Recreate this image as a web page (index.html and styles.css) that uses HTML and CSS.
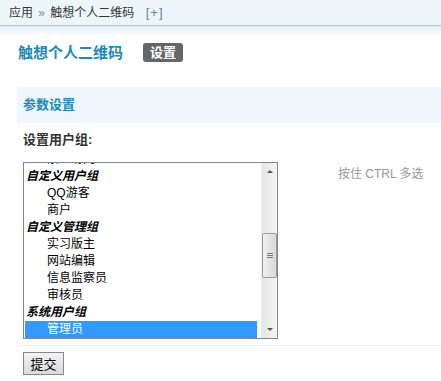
FILE: index.html
```html
<!DOCTYPE html>
<html lang="zh-CN">
<head>
  <meta charset="UTF-8" />
  <title>触想个人二维码 - 设置</title>
  <link rel="stylesheet" href="styles.css">
</head>
<body>
  <div class="crumb">应用 <span class="raquo">»</span> 触想个人二维码 <span class="add">[+]</span></div>
  <div class="fade"></div>
  <div class="title">
    <h3>触想个人二维码</h3>
    <span class="badge">设置</span>
  </div>
  <div class="section-head">参数设置</div>
  <div class="field-label">设置用户组:</div>
  <div class="field-row">
    <div class="listbox">
      <div class="options">
        <div class="opt">禁止访问</div>
        <div class="group">自定义用户组</div>
        <div class="opt">QQ游客</div>
        <div class="opt">商户</div>
        <div class="group">自定义管理组</div>
        <div class="opt">实习版主</div>
        <div class="opt">网站编辑</div>
        <div class="opt">信息监察员</div>
        <div class="opt">审核员</div>
        <div class="group">系统用户组</div>
        <div class="opt selected">管理员</div>
      </div>
      <div class="scrollbar">
        <div class="arrow"><span class="up"></span></div>
        <div class="track"><div class="thumb"><span class="grip"></span></div></div>
        <div class="arrow"><span class="down"></span></div>
      </div>
    </div>
    <div class="tip">按住 CTRL 多选</div>
  </div>
  <div class="rule"></div>
  <div class="actions">
    <button type="submit">提交</button>
  </div>
</body>
</html>
```
FILE: styles.css
```css
body { margin: 0; font: 12px "Liberation Sans", "Noto Sans CJK SC", sans-serif; color: #333; background: #fff; }
.crumb { height: 25px; line-height: 25px; padding-left: 9px; background: #eef6fa; border-bottom: 1px solid #bcc6ca; }
.raquo { color: #888; margin: 0 2px; }
.add { color: #5f82a6; margin-left: 8px; font-size: 13px; letter-spacing: 1px; }
.fade { height: 10px; background: linear-gradient(#e4f0f9, #fff); }
.title { display: flex; align-items: center; gap: 20px; height: 19px; padding: 7px 0 0 18px; }
.title h3 { margin: 0; font-size: 15px; line-height: 19px; color: #1b8bb4; }
.badge { width: 40px; height: 19px; line-height: 19px; text-align: center; background: #666; color: #fff; font-size: 13px; font-weight: bold; border-radius: 3px; }
.section-head { margin: 25px 0 0 17px; height: 36px; line-height: 36px; padding-left: 6px; background: #f0f6fb; color: #1b8bb4; font-size: 13px; font-weight: bold; }
.field-label { margin-top: 10px; padding-left: 23px; line-height: 14px; font-size: 13px; font-weight: bold; color: #333; }
.field-row { display: flex; margin-top: 15px; padding-left: 23px; }
.listbox { display: flex; width: 253px; height: 175px; border: 1px solid #82878f; overflow: hidden; background: #fff; }
.options { flex: 1; margin-top: -12px; padding: 0 4px 0 1px; }
.options div { height: 17px; line-height: 17px; color: #000; white-space: nowrap; }
.group { padding-left: 1px; font-weight: bold; font-style: italic; }
.opt { padding-left: 22px; }
.opt.selected { background: #3399ff; color: #fff; }
.scrollbar { width: 15px; display: flex; flex-direction: column; background: linear-gradient(to right, #e6e6e6, #f4f4f4); border-left: 1px solid #eee; }
.arrow { height: 17px; display: flex; align-items: center; justify-content: center; }
.up { border-left: 3px solid transparent; border-right: 3px solid transparent; border-bottom: 3px solid #555; }
.down { border-left: 3px solid transparent; border-right: 3px solid transparent; border-top: 3px solid #555; }
.track { flex: 1; padding-top: 53px; }
.thumb { height: 43px; border: 1px solid #9a9a9a; border-radius: 2px; background: linear-gradient(to right, #f1f1f1, #d9d9d9); display: flex; align-items: center; justify-content: center; }
.grip { width: 6px; height: 3px; border-top: 1px solid #777; border-bottom: 1px solid #777; background: linear-gradient(#777, #777) center / 100% 1px no-repeat; }
.tip { margin-left: 60px; padding-top: 4px; line-height: 17px; color: #999; }
.rule { margin: 6px 0 0 17px; border-top: 1px solid #eee; }
.actions { padding: 6px 0 0 23px; }
button { width: 41px; height: 23px; padding: 0; border: 1px solid #8a8a8a; background: linear-gradient(#f4f4f4, #dadada); font: 13px "Liberation Sans", "Noto Sans CJK SC", sans-serif; color: #000; }
```
